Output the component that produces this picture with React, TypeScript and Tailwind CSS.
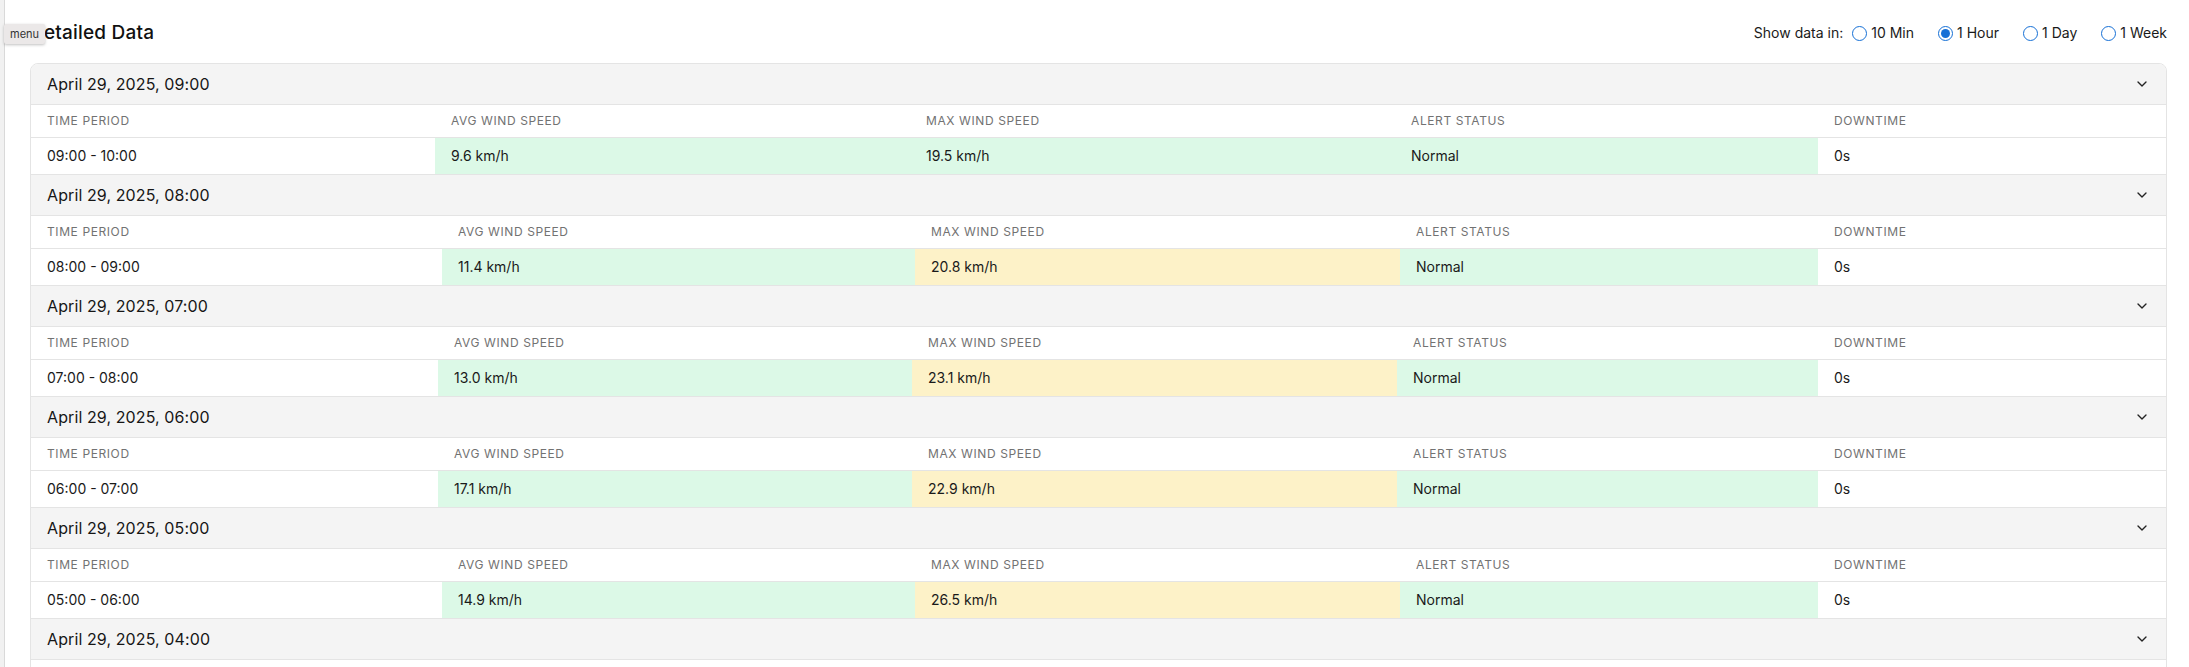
import React from "react";
import { ChevronDown } from "lucide-react";

type Group = {
  title: string;
  period: string;
  avg: string;
  max: string;
  maxWarn: boolean;
  cols: string;
};

const groups: Group[] = [
  { title: "April 29, 2025, 09:00", period: "09:00 - 10:00", avg: "9.6 km/h", max: "19.5 km/h", maxWarn: false, cols: "grid-cols-[404px_475px_485px_423px_1fr]" },
  { title: "April 29, 2025, 08:00", period: "08:00 - 09:00", avg: "11.4 km/h", max: "20.8 km/h", maxWarn: true, cols: "grid-cols-[411px_473px_485px_418px_1fr]" },
  { title: "April 29, 2025, 07:00", period: "07:00 - 08:00", avg: "13.0 km/h", max: "23.1 km/h", maxWarn: true, cols: "grid-cols-[407px_474px_485px_421px_1fr]" },
  { title: "April 29, 2025, 06:00", period: "06:00 - 07:00", avg: "17.1 km/h", max: "22.9 km/h", maxWarn: true, cols: "grid-cols-[407px_474px_485px_421px_1fr]" },
  { title: "April 29, 2025, 05:00", period: "05:00 - 06:00", avg: "14.9 km/h", max: "26.5 km/h", maxWarn: true, cols: "grid-cols-[411px_473px_485px_418px_1fr]" },
];

const options = [
  { label: "10 Min", checked: false },
  { label: "1 Hour", checked: true },
  { label: "1 Day", checked: false },
  { label: "1 Week", checked: false },
];

function Radio({ checked }: { checked: boolean }) {
  return (
    <span className="w-[15px] h-[15px] rounded-full border border-[#1670d6] bg-white flex items-center justify-center shrink-0">
      {checked && <span className="w-[9px] h-[9px] rounded-full bg-[#1670d6]" />}
    </span>
  );
}

function GroupHeader({ title }: { title: string }) {
  return (
    <div className="h-[41px] bg-[#f4f4f4] border-b border-[#e4e4e4] flex items-center justify-between pl-4 pr-4">
      <span className="text-[16px] text-[#161616] font-normal tracking-[0.1px]">{title}</span>
      <ChevronDown size={16} strokeWidth={2} className="text-[#222]" />
    </div>
  );
}

function GroupBlock({ g }: { g: Group }) {
  return (
    <div>
      <GroupHeader title={g.title} />
      <div className={`grid ${g.cols} h-[33px] border-b border-[#e4e4e4] bg-white`}>
        {["Time Period", "Avg Wind Speed", "Max Wind Speed", "Alert Status", "Downtime"].map((h) => (
          <div key={h} className="pl-4 flex items-center text-[12px] uppercase tracking-wider text-[#727272]">
            {h}
          </div>
        ))}
      </div>
      <div className={`grid ${g.cols} h-[37px] border-b border-[#e4e4e4] text-sm text-[#1a1a1a]`}>
        <div className="pl-4 flex items-center bg-white">{g.period}</div>
        <div className="pl-4 flex items-center bg-[#dcf9e7]">{g.avg}</div>
        <div className={`pl-4 flex items-center ${g.maxWarn ? "bg-[#fdf2c8]" : "bg-[#dcf9e7]"}`}>{g.max}</div>
        <div className="pl-4 flex items-center bg-[#dcf9e7]">Normal</div>
        <div className="pl-4 flex items-center bg-white">0s</div>
      </div>
    </div>
  );
}

export default function App() {
  return (
    <div className="relative h-screen w-full overflow-hidden bg-white flex font-['Inter',sans-serif]">
      <div className="w-[5px] shrink-0 bg-[#f1f1f1] border-r border-[#d9d9d9]" />
      <div className="flex-1 pl-[25px] pr-[22px] pt-[18px]">
        <div className="h-[30px] mb-[15px] flex items-center justify-between">
          <h2 className="text-[19px] font-medium text-[#111] tracking-[0.2px]">Detailed Data</h2>
          <div className="flex items-center text-sm text-[#1a1a1a]">
            <span className="mr-[9px]">Show data in:</span>
            {options.map((o, i) => (
              <label key={o.label} className={`flex items-center gap-[4px] ${i < options.length - 1 ? "mr-[24px]" : ""}`}>
                <Radio checked={o.checked} />
                <span>{o.label}</span>
              </label>
            ))}
          </div>
        </div>
        <div className="border border-[#e4e4e4] rounded-lg overflow-hidden">
          {groups.map((g) => (
            <GroupBlock key={g.title} g={g} />
          ))}
          <GroupHeader title="April 29, 2025, 04:00" />
          <div className="h-[40px] bg-white" />
        </div>
      </div>
      <div className="absolute left-[4px] top-[24px] h-[20px] px-[6px] flex items-center bg-[#ebe8e8] text-[11px] text-[#333] rounded-[2px] shadow-[0_1px_3px_rgba(0,0,0,0.25)]">
        menu
      </div>
    </div>
  );
}
